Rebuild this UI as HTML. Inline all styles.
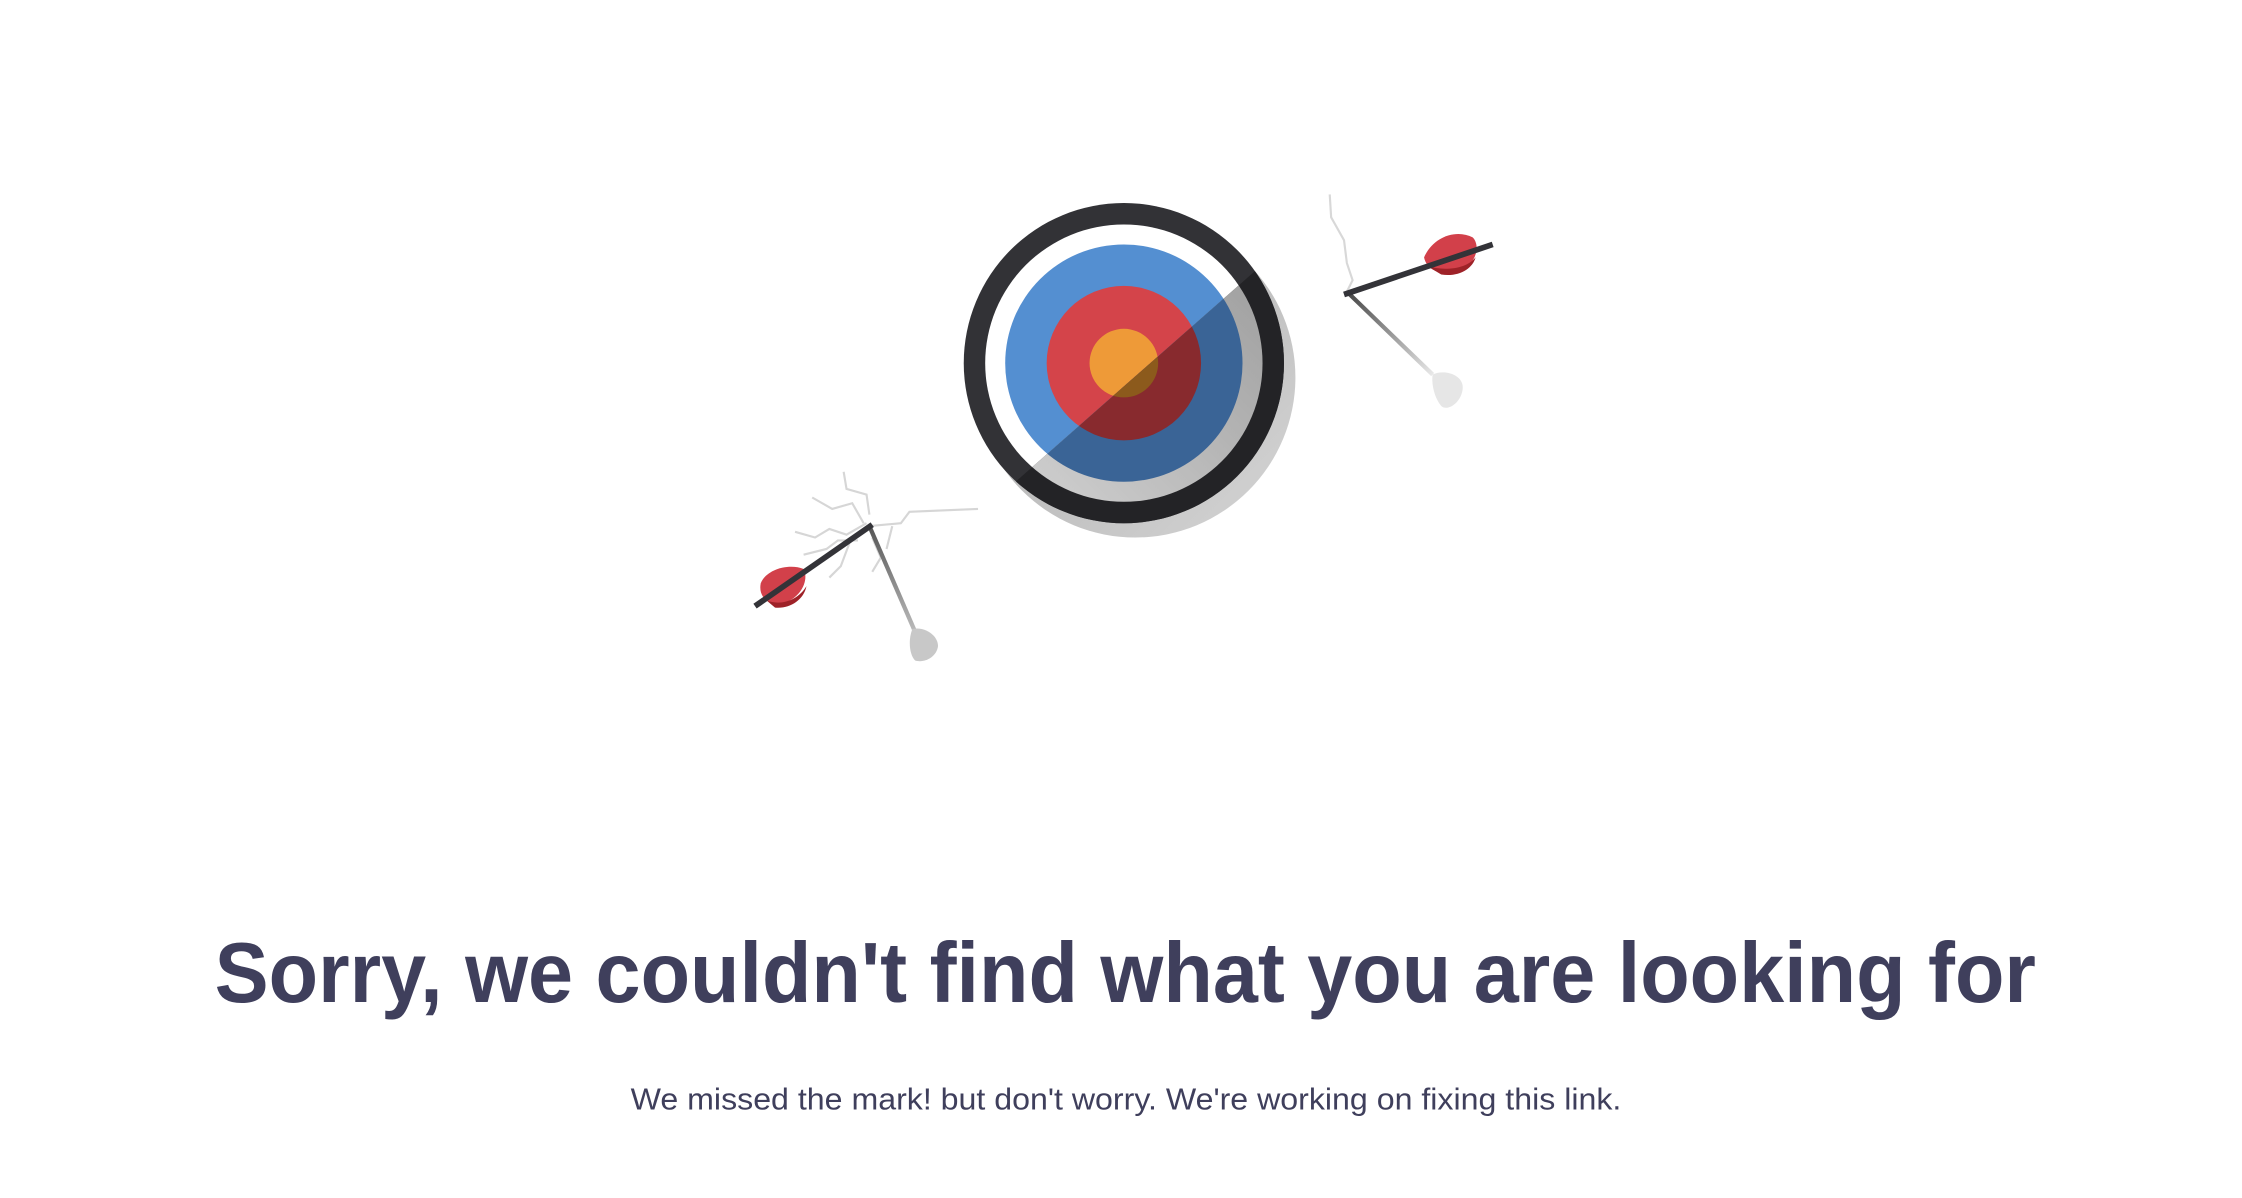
<!DOCTYPE html>
<html><head><meta charset="utf-8"><style>
html,body{margin:0;padding:0;background:#fff;width:2242px;height:1198px;overflow:hidden}
svg{display:block}
</style></head><body>
<svg width="2242" height="1198" viewBox="0 0 1568 838" xmlns="http://www.w3.org/2000/svg">
<defs>
<clipPath id="half"><polygon points="600,434 1000,82 1000,520 600,520"/></clipPath>
<linearGradient id="sh" x1="0" y1="0" x2="1" y2="1"><stop offset="0" stop-color="#888"/><stop offset="1" stop-color="#c8c8c8"/></linearGradient>
<linearGradient id="in" x1="1" y1="0" x2="0" y2="1"><stop offset="0" stop-color="#9a9a9a"/><stop offset="1" stop-color="#d4d4d4"/></linearGradient>
<linearGradient id="tailR" x1="0" y1="0" x2="1" y2="1"><stop offset="0" stop-color="#444"/><stop offset="1" stop-color="#e8e8e8"/></linearGradient>
<linearGradient id="tailL" x1="0" y1="0" x2="0" y2="1"><stop offset="0" stop-color="#555"/><stop offset="1" stop-color="#bbb"/></linearGradient>
</defs>
<circle cx="794" cy="264" r="112" fill="url(#sh)" opacity="0.75"/>
<circle cx="786" cy="254" r="112" fill="#323236"/>
<circle cx="786" cy="254" r="97" fill="#fff"/>
<circle cx="786" cy="254" r="83" fill="#548fd1"/>
<circle cx="786" cy="254" r="54" fill="#d4444a"/>
<circle cx="786" cy="254" r="24" fill="#ee9a38"/>
<g clip-path="url(#half)">
<circle cx="786" cy="254" r="112" fill="#232326"/>
<circle cx="786" cy="254" r="97" fill="url(#in)"/>
<circle cx="786" cy="254" r="83" fill="#3a6496"/>
<circle cx="786" cy="254" r="54" fill="#882a2e"/>
<circle cx="786" cy="254" r="24" fill="#8c5a1c"/>
</g>
<path d="M930,136 L931,152 L940,168 L942,184 L946,196 L942,204" stroke="#d8d8d8" stroke-width="1.5" fill="none"/>
<path d="M942,204 L1002,262" stroke="url(#tailR)" stroke-width="3" fill="none"/>
<path d="M1002,262 C1010,258 1024,262 1023,272 C1022,282 1012,288 1008,284 C1003,278 1001,268 1002,262Z" fill="#e6e6e6"/>
<path d="M996,180 C1002,166 1018,160 1030,166 C1036,172 1032,186 1020,190 C1010,193 998,190 996,180Z" fill="#d2404a"/>
<path d="M998,186 C1010,190 1026,188 1032,180 C1030,188 1020,194 1008,192Z" fill="#9e2228"/>
<path d="M940,206 L1044,171" stroke="#333338" stroke-width="4" fill="none"/>
<g stroke="#d6d6d6" stroke-width="1.5" fill="none">
<path d="M590,330 L592,342 L606,346 L608,360"/>
<path d="M568,348 L582,356 L596,352 L604,366"/>
<path d="M556,372 L570,376 L580,370 L592,374 L606,366"/>
<path d="M562,388 L578,384 L586,378 L600,378"/>
<path d="M608,368 L630,366 L636,358 L684,356"/>
<path d="M624,368 L620,384"/>
<path d="M610,376 L616,390 L610,400"/>
<path d="M594,380 L588,396 L580,404"/>
</g>
<path d="M608,368 L640,442" stroke="url(#tailL)" stroke-width="3" fill="none"/>
<path d="M638,440 C646,438 656,444 656,452 C655,460 646,464 640,462 C636,458 635,448 638,440Z" fill="#c8c8c8"/>
<path d="M532,408 C536,398 552,394 562,398 C566,406 560,418 548,422 C538,424 530,418 532,408Z" fill="#d2404a"/>
<path d="M536,420 C546,424 558,420 564,410 C562,420 552,426 542,425Z" fill="#9e2228"/>
<path d="M528,424 L610,367" stroke="#333338" stroke-width="4" fill="none"/>
<text x="150" y="701" textLength="1274" lengthAdjust="spacingAndGlyphs" font-family="Liberation Sans, Arial, sans-serif" font-weight="bold" font-size="60" fill="#3f3f5c">Sorry, we couldn't find what you are looking for</text>
<text x="441" y="776" textLength="693" lengthAdjust="spacingAndGlyphs" font-family="Liberation Sans, Arial, sans-serif" font-size="21.5" fill="#3f3f5c">We missed the mark! but don't worry. We're working on fixing this link.</text>
</svg>
</body></html>
